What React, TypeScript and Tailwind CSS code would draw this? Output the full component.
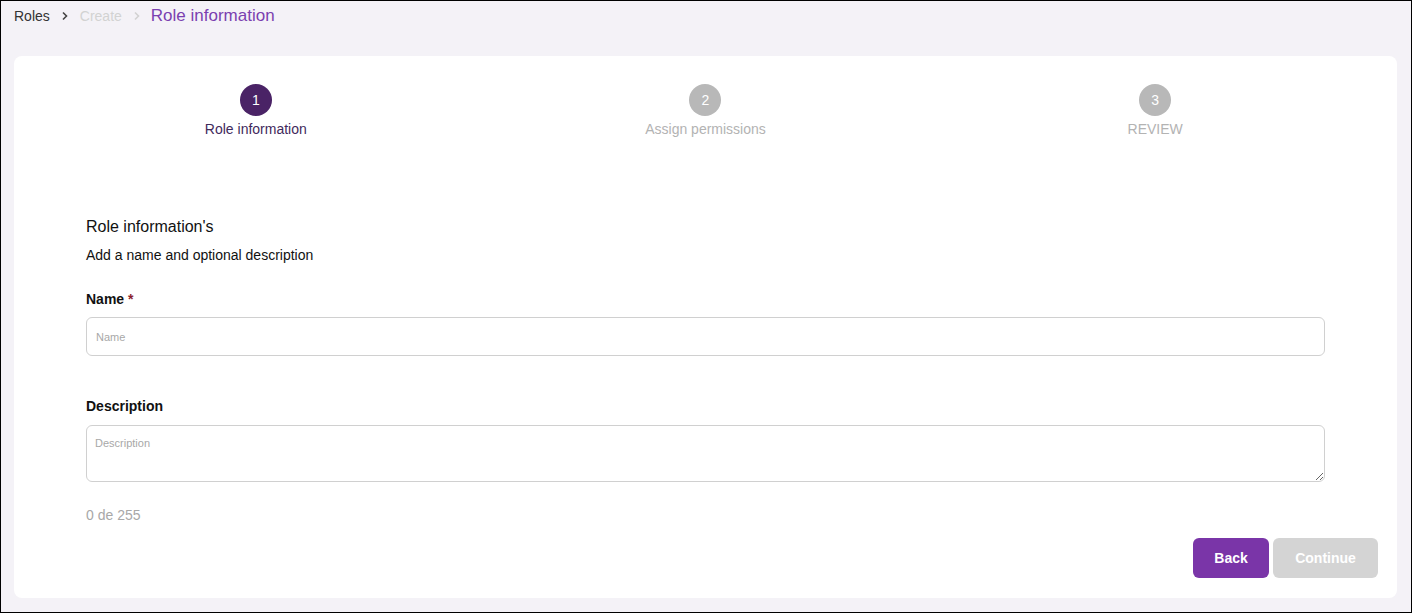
import { useState } from "react"

const steps = [
  { n: 1, label: "Role information", active: true },
  { n: 2, label: "Assign permissions", active: false },
  { n: 3, label: "REVIEW", active: false },
]

function Chevron({ className }: { className: string }) {
  return (
    <svg width="10" height="10" viewBox="0 0 10 10" className={className} fill="none">
      <path d="M3 1.5 6.5 5 3 8.5" stroke="currentColor" strokeWidth="1.6" />
    </svg>
  )
}

export default function App() {
  const [name, setName] = useState("")
  const [description, setDescription] = useState("")

  return (
    <div className="h-[613px] w-[1412px] overflow-hidden border border-black bg-[#f4f2f7] font-['Liberation_Sans',Arial,sans-serif]">
      <div className="flex h-[29px] items-center gap-[10px] pl-[13px] pt-[1px] text-sm">
        <span className="text-[#333]">Roles</span>
        <Chevron className="text-[#444]" />
        <span className="text-[#d2d2d2]">Create</span>
        <Chevron className="text-[#d2d2d2]" />
        <span className="-ml-[1px] text-[17px] text-[#7b3fb0]">Role information</span>
      </div>

      <div className="ml-[13px] mr-[14px] mt-[26px] flex h-[542px] flex-col rounded-lg bg-white px-[17px]">
        <div className="mt-[28px] grid grid-cols-3">
          {steps.map((s) => (
            <div key={s.n} className="flex flex-col items-center">
              <div
                className={
                  s.active
                    ? "flex h-8 w-8 items-center justify-center rounded-full bg-[#4a2366] text-sm text-white"
                    : "flex h-8 w-8 items-center justify-center rounded-full bg-[#b8b8b8] text-sm text-white"
                }
              >
                {s.n}
              </div>
              <span
                className={
                  s.active ? "mt-[3px] text-sm text-[#3f2a5c]" : "mt-[3px] text-sm text-[#b3b3b3]"
                }
              >
                {s.label}
              </span>
            </div>
          ))}
        </div>

        <div className="mt-[78px] px-[55px]">
          <h2 className="text-base leading-5 text-[#111]">Role information's</h2>
          <p className="mt-[8px] text-sm text-[#111]">Add a name and optional description</p>

          <label htmlFor="name" className="mt-[24px] block text-sm font-bold text-[#111]">
            Name <span className="text-[#8b1f2e]">*</span>
          </label>
          <input
            id="name"
            value={name}
            onChange={(e) => setName(e.target.value)}
            placeholder="Name"
            className="mt-[8px] block h-[39px] w-full rounded-md border border-[#d0d0d0] px-[9px] text-[11px] text-[#333] outline-none placeholder:text-[#a8a8a8]"
          />

          <label htmlFor="description" className="mt-[40px] block text-sm font-bold text-[#111]">
            Description
          </label>
          <textarea
            id="description"
            value={description}
            maxLength={255}
            onChange={(e) => setDescription(e.target.value)}
            placeholder="Description"
            className="mt-[9px] block h-[57px] w-full rounded-md border border-[#d0d0d0] px-[8px] py-[9px] text-[11px] text-[#333] outline-none placeholder:text-[#a8a8a8]"
          />
          <p className="mt-[23px] text-sm text-[#a8a8a8]">{description.length} de 255</p>
        </div>

        <div className="mt-[13px] flex justify-end gap-[4px] pr-[2px]">
          <button className="h-10 w-[76px] rounded-md bg-[#7a35a8] text-sm font-bold text-white">Back</button>
          <button disabled className="h-10 w-[105px] rounded-md bg-[#d4d4d4] text-sm font-bold text-white">
            Continue
          </button>
        </div>
      </div>
    </div>
  )
}
